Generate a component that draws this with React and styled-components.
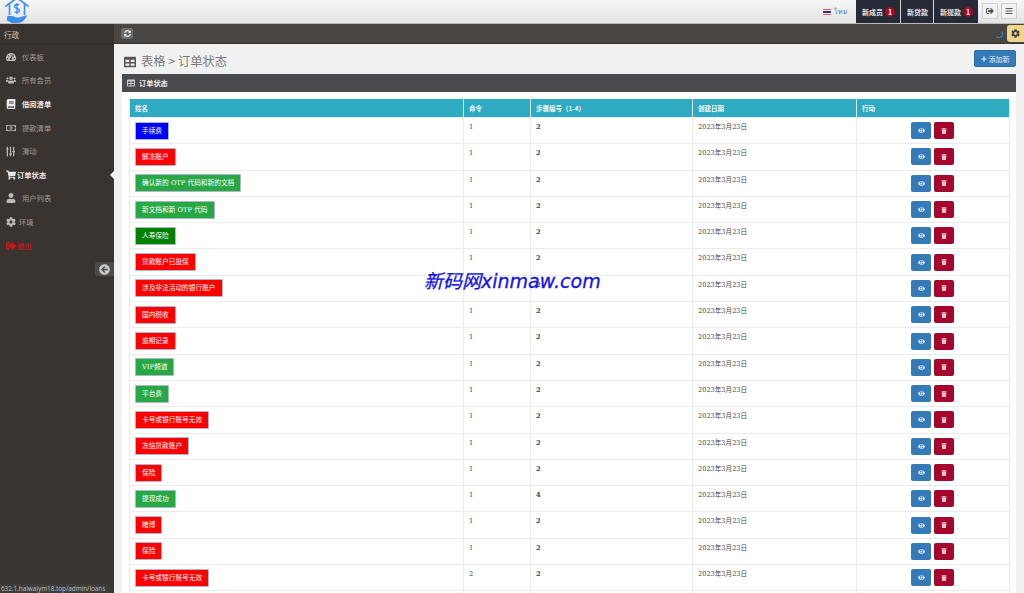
import styled, { createGlobalStyle } from 'styled-components';
import {
  FaTachometerAlt, FaUsers, FaBook, FaRegMoneyBillAlt, FaSlidersH, FaShoppingCart, FaUser, FaCog,
  FaSignOutAlt, FaArrowCircleLeft, FaSyncAlt, FaTable, FaPlus, FaEye, FaTrash, FaBars,
} from 'react-icons/fa';

const GlobalStyle = createGlobalStyle`
  html, body {
    margin: 0;
    height: 100%;
    overflow: hidden;
    background: #f1f1f1;
    font-family: 'DejaVu Serif', 'Noto Sans CJK SC', serif;
  }
`;

const menu = [
  { icon: FaTachometerAlt, label: '仪表板', gap: 6 },
  { icon: FaUsers, label: '所有会员', gap: 6 },
  { icon: FaBook, label: '借阅清单', gap: 6, bold: true },
  { icon: FaRegMoneyBillAlt, label: '提款清单', gap: 6 },
  { icon: FaSlidersH, label: '滑动', gap: 6, turned: true },
  { icon: FaShoppingCart, label: '订单状态', gap: 1, active: true },
  { icon: FaUser, label: '用户列表', gap: 6 },
  { icon: FaCog, label: '环境', gap: 3 },
  { icon: FaSignOutAlt, label: '退出', gap: 1, danger: true },
];

const BLUE = '#0000ff';
const RED = '#ff0000';
const GREEN = '#28a745';
const DARKGREEN = '#008000';

const rows = [
  ['手续费', BLUE, 1, 2],
  ['解冻账户', RED, 1, 2],
  ['确认新的 OTP 代码和新的文档', GREEN, 1, 2],
  ['新文档和新 OTP 代码', GREEN, 1, 2],
  ['人寿保险', DARKGREEN, 1, 2],
  ['贷款账户已投保', RED, 1, 2],
  ['涉及非法活动的银行账户', RED, 1, 2],
  ['国内税收', RED, 1, 2],
  ['逾期记录', RED, 1, 2],
  ['VIP频道', GREEN, 1, 2],
  ['平台费', GREEN, 1, 2],
  ['卡号或银行账号无效', RED, 1, 2],
  ['冻结贷款账户', RED, 1, 2],
  ['保险', RED, 1, 2],
  ['提现成功', GREEN, 1, 4],
  ['赌博', RED, 1, 2],
  ['保险', RED, 1, 2],
  ['卡号或银行账号无效', RED, 2, 2],
];

function Logo() {
  return (
    <svg width="24" height="24" viewBox="0 0 24 24" fill="none" stroke="#3b8ef0" strokeWidth="1.6">
      <path d="M1 6 L12 -2 L23 6" strokeLinecap="round" />
      <path d="M4.5 4 V15 M19.5 4 V15" />
      <path d="M14.5 5 C13 4 9.5 4.2 9.5 6.4 C9.5 9 14.5 7.8 14.5 10.4 C14.5 12.6 11 12.8 9.5 11.8 M12 3 V14" strokeWidth="1.3" />
      <path d="M2 16.5 C5 15 8 16 11 17.5 L14 17.5 L22 15 C21 19 17 23 13 23 L7 23 L2 20.5 Z" fill="#3b8ef0" stroke="none" />
    </svg>
  );
}

function ThaiFlag() {
  return (
    <svg width="8" height="6" viewBox="0 0 9 7">
      <rect width="9" height="7" fill="#e8515d" />
      <rect y="1.2" width="9" height="4.6" fill="#fff" />
      <rect y="2.3" width="9" height="2.4" fill="#2d2a6e" />
    </svg>
  );
}

export default function App() {
  return (
    <Page>
      <GlobalStyle />
      <TopBar>
        <LogoBox><Logo /></LogoBox>
        <TopRight>
          <Lang><ThaiFlag /><span>ไทย</span></Lang>
          <Tabs>
            <Tab>新成员<Badge>1</Badge></Tab>
            <Tab>新贷款</Tab>
            <Tab>新提款<Badge>1</Badge></Tab>
          </Tabs>
          <SquareButton><FaSignOutAlt /></SquareButton>
          <SquareButton><FaBars /></SquareButton>
        </TopRight>
      </TopBar>
      <Body>
        <Sidebar>
          <SideTitle>行政</SideTitle>
          <Menu>
            {menu.map((item) => (
              <MenuItem key={item.label} $active={item.active} $bold={item.bold} $danger={item.danger}>
                <MenuIcon
                  $turned={item.turned}
                  $gap={item.gap}
                  $muted={!item.active && !item.bold && !item.danger}
                >
                  <item.icon />
                </MenuIcon>
                {item.label}
              </MenuItem>
            ))}
          </Menu>
          <Collapse><FaArrowCircleLeft /></Collapse>
        </Sidebar>
        <Main>
          <Toolbar>
            <RefreshButton><FaSyncAlt /></RefreshButton>
            <ToolbarRight>
              <Spinner />
              <GearButton><FaCog /></GearButton>
            </ToolbarRight>
          </Toolbar>
          <Content>
            <TitleRow>
              <Title><FaTable />表格 &gt; 订单状态</Title>
              <AddButton><FaPlus />添加新</AddButton>
            </TitleRow>
            <Panel>
              <PanelHead><FaTable />订单状态</PanelHead>
              <PanelBody>
                <Table>
                  <colgroup>
                    <col style={{ width: 334 }} />
                    <col style={{ width: 67 }} />
                    <col style={{ width: 162 }} />
                    <col style={{ width: 164 }} />
                    <col style={{ width: 153 }} />
                  </colgroup>
                  <thead>
                    <tr>
                      <Th>姓名</Th>
                      <Th>命令</Th>
                      <Th>步骤编号（1-4）</Th>
                      <Th>创建日期</Th>
                      <Th>行动</Th>
                    </tr>
                  </thead>
                  <tbody>
                    {rows.map(([name, color, order, step], i) => (
                      <tr key={i}>
                        <LabelCell><Label $color={color}>{name}</Label></LabelCell>
                        <Td>{order}</Td>
                        <Td><strong>{step}</strong></Td>
                        <Td>2023年3月23日</Td>
                        <ActionCell>
                          <ViewButton><FaEye /></ViewButton>
                          <DeleteButton><FaTrash /></DeleteButton>
                        </ActionCell>
                      </tr>
                    ))}
                    <tr><LabelCell /><Td /><Td /><Td /><ActionCell /></tr>
                  </tbody>
                </Table>
              </PanelBody>
            </Panel>
          </Content>
        </Main>
      </Body>
      <Watermark>新码网xinmaw.com</Watermark>
      <StatusBar>632.1.haiwaiym18.top/admin/loans</StatusBar>
    </Page>
  );
}

const Page = styled.div`
  position: relative;
  width: 1024px;
  height: 593px;
  overflow: hidden;
  display: flex;
  flex-direction: column;
`;

const TopBar = styled.header`
  height: 24px;
  flex: none;
  display: flex;
  justify-content: space-between;
  background: linear-gradient(#f6f6f6, #e4e4e4);
  border-bottom: 1px solid #b9b9b9;
  box-sizing: border-box;
`;

const LogoBox = styled.div`
  padding-left: 5px;
  height: 23px;
  overflow: hidden;
`;

const TopRight = styled.div`
  display: flex;
  align-items: stretch;
  padding-right: 4px;
`;

const Lang = styled.div`
  display: flex;
  align-items: center;
  gap: 3px;
  margin-right: 9px;
  font-family: 'Noto Sans', sans-serif;
  font-size: 7px;
  color: #4a7fb5;
`;

const Tabs = styled.div`
  display: flex;
  gap: 1px;
  margin-right: 4px;
  background: #d8d8d8;
`;

const Tab = styled.div`
  display: flex;
  align-items: center;
  gap: 2px;
  padding: 0 5px 0 6px;
  background: #262936;
  color: #e4e4e4;
  font-size: 7px;
  font-weight: 700;
  font-family: 'Noto Sans CJK SC', sans-serif;
`;

const Badge = styled.span`
  width: 10px;
  height: 10px;
  border-radius: 50%;
  background: #a50a2e;
  color: #fff;
  font-size: 7px;
  line-height: 10px;
  text-align: center;
`;

const SquareButton = styled.button`
  width: 16px;
  height: 16px;
  margin: 3px 3px 0 0;
  padding: 0;
  display: flex;
  align-items: center;
  justify-content: center;
  background: #f2f2f2;
  border: 1px solid #cfcfcf;
  color: #555;
  font-size: 8px;
`;

const Body = styled.div`
  flex: 1;
  min-height: 0;
  display: flex;
`;

const Sidebar = styled.aside`
  position: relative;
  width: 114px;
  flex: none;
  background: #3a3431;
  box-sizing: border-box;
`;

const SideTitle = styled.div`
  height: 21px;
  padding: 4px;
  box-sizing: border-box;
  font-size: 7.5px;
  line-height: 13px;
  color: #c9c5c2;
  font-family: 'Noto Sans CJK SC', sans-serif;
  border-bottom: 2px solid #332e2b;
`;

const Menu = styled.nav`
  display: flex;
  flex-direction: column;
`;

const MenuItem = styled.a`
  position: relative;
  height: 23.6px;
  display: flex;
  align-items: center;
  padding-left: 5px;
  font-family: 'Noto Sans CJK SC', sans-serif;
  font-size: 7.3px;
  font-weight: ${(p) => (p.$bold || p.$active ? 700 : 400)};
  color: ${(p) => (p.$danger ? '#e01010' : p.$active || p.$bold ? '#e8e8e8' : '#a09b97')};

  ${(p) => p.$active && `
    &::after {
      content: '';
      position: absolute;
      right: 0;
      top: 8px;
      border: 4px solid transparent;
      border-right-color: #f4f4f4;
      border-left-width: 0;
    }
  `}
`;

const MenuIcon = styled.span`
  display: inline-flex;
  justify-content: center;
  width: 11px;
  margin-right: ${(p) => p.$gap}px;
  font-size: 10px;
  color: ${(p) => (p.$muted ? '#bdb9b6' : 'inherit')};
  transform: ${(p) => (p.$turned ? 'rotate(90deg)' : 'none')};
`;

const Collapse = styled.div`
  position: absolute;
  top: 238px;
  right: 0;
  width: 19px;
  height: 14px;
  display: flex;
  align-items: center;
  justify-content: center;
  background: #4d4a48;
  border-radius: 3px 0 0 3px;
  color: #c9c9c9;
  font-size: 11px;
`;

const Main = styled.main`
  flex: 1;
  min-width: 0;
  display: flex;
  flex-direction: column;
`;

const Toolbar = styled.div`
  height: 20px;
  flex: none;
  display: flex;
  align-items: center;
  justify-content: space-between;
  padding-left: 7px;
  background: #484543;
  border-bottom: 1px solid #3a3836;
  box-sizing: border-box;
`;

const RefreshButton = styled.div`
  width: 12px;
  height: 11px;
  display: flex;
  align-items: center;
  justify-content: center;
  background: #6c6a68;
  border-radius: 2px;
  color: #eee;
  font-size: 7px;
`;

const ToolbarRight = styled.div`
  display: flex;
  align-items: center;
  gap: 4px;
`;

const Spinner = styled.div`
  width: 6px;
  height: 6px;
  border: 1px solid transparent;
  border-right-color: #3b8ac4;
  border-bottom-color: #3b8ac4;
  border-radius: 50%;
`;

const GearButton = styled.div`
  width: 17px;
  height: 17px;
  display: flex;
  align-items: center;
  justify-content: center;
  background: #f0d68a;
  border-radius: 3px 0 0 3px;
  color: #444;
  font-size: 9px;
`;

const Content = styled.div`
  flex: 1;
  min-height: 0;
  padding: 6px 8px 0;
`;

const TitleRow = styled.div`
  height: 24px;
  display: flex;
  justify-content: space-between;
  align-items: flex-start;
`;

const Title = styled.h1`
  margin: 3px 0 0 2px;
  display: flex;
  align-items: center;
  gap: 5px;
  font-family: 'Noto Sans CJK SC', sans-serif;
  font-size: 12.3px;
  line-height: 17px;
  font-weight: 400;
  color: #7a7a7a;

  svg {
    color: #555;
    font-size: 12px;
  }
`;

const AddButton = styled.button`
  height: 17px;
  width: 42px;
  padding: 0;
  display: flex;
  align-items: center;
  justify-content: center;
  gap: 2px;
  background: #337ab7;
  border: 1px solid #2e6da4;
  border-radius: 2px;
  color: #e8eef5;
  font-family: 'Noto Sans CJK SC', sans-serif;
  font-size: 7px;

  svg {
    font-size: 6px;
  }
`;

const Panel = styled.section`
  background: #fff;
`;

const PanelHead = styled.div`
  height: 18px;
  display: flex;
  align-items: center;
  gap: 4px;
  padding-left: 5px;
  background: #4a4b4f;
  color: #eaeaea;
  font-family: 'Noto Sans CJK SC', sans-serif;
  font-size: 7.2px;
  font-weight: 700;

  svg {
    font-size: 8px;
    color: #ccc;
  }
`;

const PanelBody = styled.div`
  padding: 7px 7px 0;
`;

const Table = styled.table`
  width: 880px;
  table-layout: fixed;
  border-collapse: collapse;
  font-size: 6.6px;
  color: #444;
`;

const Th = styled.th`
  height: 18px;
  padding: 0 5px;
  background: #2eaac1;
  border: 1px solid #d9e9ec;
  border-width: 0 1px;
  color: #f2f8fa;
  font-family: 'Noto Sans CJK SC', sans-serif;
  font-size: 6.5px;
  font-weight: 700;
  text-align: left;
`;

const Td = styled.td`
  height: 26.3px;
  box-sizing: border-box;
  padding: 4px 5px 0;
  border: 1px solid #ebebeb;
  vertical-align: top;
  line-height: 10px;
  font-family: 'DejaVu Serif', 'Noto Sans CJK SC', serif;
`;

const LabelCell = styled(Td)`
  padding-top: 0;
  vertical-align: middle;
`;

const ActionCell = styled(Td)`
  padding: 0 56px 0 54px;
  vertical-align: middle;
  text-align: center;
  white-space: nowrap;
`;

const Label = styled.span`
  display: inline-block;
  padding: 0 6px;
  height: 16px;
  line-height: 16px;
  background: ${(p) => p.$color};
  border: 1px solid #a9b8cc;
  border-radius: 1px;
  color: #fff;
  font-family: 'DejaVu Serif', 'Noto Sans CJK SC', serif;
  font-size: 6.7px;
  vertical-align: middle;
`;

const IconButton = styled.button`
  width: 20px;
  height: 17px;
  padding: 0;
  display: inline-flex;
  align-items: center;
  justify-content: center;
  border: none;
  border-radius: 2px;
  color: #dbe6f0;
  font-size: 7px;
  vertical-align: middle;
`;

const ViewButton = styled(IconButton)`
  background: #337ab7;
  margin-right: 3px;
`;

const DeleteButton = styled(IconButton)`
  background: #a5062e;
  color: #f0c4cc;
  font-size: 6px;
`;

const Watermark = styled.div`
  position: absolute;
  left: 424px;
  top: 268px;
  font-family: 'DejaVu Sans', 'Noto Sans CJK SC', sans-serif;
  font-style: italic;
  font-size: 19px;
  line-height: 27px;
  color: #1414e6;
  -webkit-text-stroke: 0.3px #1414e6;
  white-space: nowrap;
`;

const StatusBar = styled.div`
  position: absolute;
  left: 0;
  bottom: 0;
  width: 110px;
  height: 9px;
  padding-left: 1px;
  box-sizing: border-box;
  background: #3f3d3c;
  border-radius: 0 2px 0 0;
  color: #b9b9b9;
  font-family: 'Noto Sans', sans-serif;
  font-size: 6.3px;
  line-height: 9px;
  white-space: nowrap;
  overflow: hidden;
`;
